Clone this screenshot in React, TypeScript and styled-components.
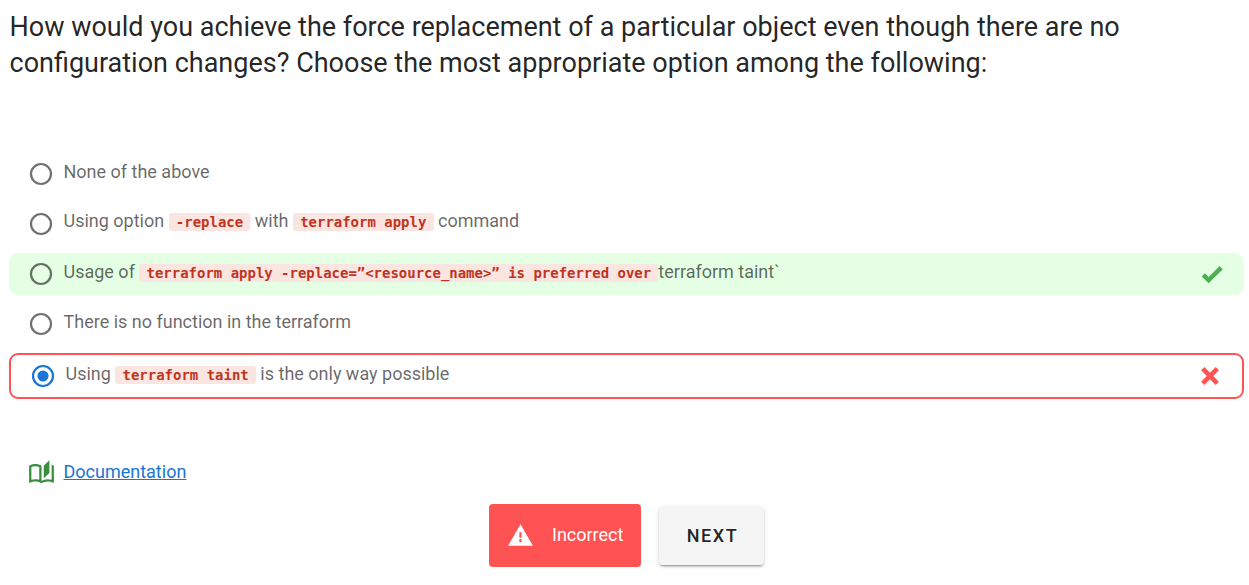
import React from "react";
import styled, { createGlobalStyle } from "styled-components";

const GlobalStyle = createGlobalStyle`
  * { box-sizing: border-box; }
  body { margin: 0; background: #fff; font-family: Roboto, sans-serif; color: rgba(0, 0, 0, 0.87); overflow: hidden; }
`;

const Page = styled.main`
  height: 585px;
  padding: 9px 5px 0 9px;
`;

const Question = styled.h1`
  margin: 0 0 72px;
  height: 72px;
  padding-left: 0.5px;
  font-size: 27px;
  font-weight: 400;
  line-height: 36px;
  white-space: nowrap;
`;

const Options = styled.div`
  display: flex;
  flex-direction: column;
  gap: 8px;
`;

type Verdict = "none" | "correct" | "wrong";

const Option = styled.label<{ $verdict: Verdict }>`
  display: flex;
  align-items: center;
  height: ${(p) => (p.$verdict === "wrong" ? 46 : 42)}px;
  padding: 0 19px;
  border: ${(p) => (p.$verdict === "wrong" ? "2px solid #ff5252" : "0")};
  border-radius: 9px;
  background: ${(p) => (p.$verdict === "correct" ? "#e4ffe4" : "transparent")};
`;

const Text = styled.span<{ $lift: number }>`
  flex: 1;
  margin-left: 9.5px;
  padding-bottom: ${(p) => p.$lift * 2}px;
  font-size: 18px;
  line-height: 22px;
  color: rgba(0, 0, 0, 0.6);
  white-space: pre;
`;

const Code = styled.code`
  display: inline-block;
  height: 18px;
  padding: 0 7.2px;
  border-radius: 3px;
  background: #fbe5e1;
  color: #c0341d;
  font: 700 13.97px/18px "DejaVu Sans Mono", monospace;
`;

const Svg = styled.svg<{ $color: string }>`
  display: block;
  flex: none;
  fill: ${(p) => p.$color};
`;

const Resource = styled.div`
  display: flex;
  align-items: center;
  height: 30px;
  margin: 58px 0 0 18.5px;
`;

const DocLink = styled.a`
  margin-left: 9px;
  font-size: 18px;
  line-height: 24px;
  color: #1976d2;
  text-decoration: underline;
`;

const Actions = styled.div`
  display: flex;
  align-items: center;
  gap: 18px;
  margin: 17px 0 0 480px;
`;

const Alert = styled.div`
  display: flex;
  align-items: center;
  width: 152px;
  height: 63px;
  padding-left: 18px;
  border-radius: 4px;
  background: #ff5252;
  color: #fff;
  font-size: 18px;
`;

const AlertText = styled.span`
  margin-left: 18px;
  padding-bottom: 2px;
`;

const NextButton = styled.button`
  width: 105px;
  height: 58px;
  margin-top: 1px;
  padding: 0 0 2px;
  border: 0;
  border-radius: 4px;
  background: #f5f5f5;
  color: rgba(0, 0, 0, 0.87);
  font: 500 18px Roboto, sans-serif;
  letter-spacing: 1.6px;
  text-indent: 2px;
  box-shadow: 0 3px 1px -2px rgba(0, 0, 0, 0.2), 0 2px 2px rgba(0, 0, 0, 0.14), 0 1px 5px rgba(0, 0, 0, 0.12);
`;

const icons = {
  check: "M9,20.42L2.79,14.21L5.62,11.38L9,14.77L18.88,4.88L21.71,7.71L9,20.42Z",
  close: "M20 6.91L17.09 4L12 9.09L6.91 4L4 6.91L9.09 12L4 17.09L6.91 20L12 14.91L17.09 20L20 17.09L14.91 12L20 6.91Z",
  alert: "M13 14H11V9H13M13 18H11V15H13M1 21H23L12 2L1 21Z",
  book: "M19 1L14 6V17L19 12.5V1M21 5V18.5C19.9 18.15 18.7 18 17.5 18C15.8 18 13.35 18.65 12 19.5V6C10.55 4.9 8.45 4.5 6.5 4.5C4.55 4.5 2.45 4.9 1 6V20.65C1 20.9 1.25 21.15 1.5 21.15C1.6 21.15 1.65 21.1 1.75 21.1C3.1 20.45 5.05 20 6.5 20C8.45 20 10.55 20.4 12 21.5C13.35 20.65 15.8 20 17.5 20C19.15 20 20.85 20.3 22.25 21.05C22.35 21.1 22.4 21.1 22.5 21.1C22.75 21.1 23 20.85 23 20.6V6C22.4 5.55 21.75 5.25 21 5M10 18.41C8.75 18.09 7.5 18 6.5 18C5.44 18 4.18 18.19 3 18.5V7.13C3.91 6.73 5.14 6.5 6.5 6.5C7.86 6.5 9.09 6.73 10 7.13V18.41Z",
  radioOff: "M12,20A8,8 0 0,1 4,12A8,8 0 0,1 12,4A8,8 0 0,1 20,12A8,8 0 0,1 12,20M12,2A10,10 0 0,0 2,12A10,10 0 0,0 12,22A10,10 0 0,0 22,12A10,10 0 0,0 12,2Z",
  radioOn: "M12,20A8,8 0 0,1 4,12A8,8 0 0,1 12,4A8,8 0 0,1 20,12A8,8 0 0,1 12,20M12,2A10,10 0 0,0 2,12A10,10 0 0,0 12,22A10,10 0 0,0 22,12A10,10 0 0,0 12,2M12,7A5,5 0 0,0 7,12A5,5 0 0,0 12,17A5,5 0 0,0 17,12A5,5 0 0,0 12,7Z",
};

function Icon({ name, color, size = 26 }: { name: keyof typeof icons; color: string; size?: number }) {
  const viewBox = size === 26 ? "0.3 0.3 23.4 23.4" : "0 0 24 24";
  return (
    <Svg $color={color} width={size} height={size} viewBox={viewBox} aria-hidden>
      <path d={icons[name]} />
    </Svg>
  );
}

interface ChoiceProps {
  verdict?: Verdict;
  selected?: boolean;
  lift?: number;
  children: React.ReactNode;
}

function Choice({ verdict = "none", selected = false, lift = 2, children }: ChoiceProps) {
  return (
    <Option $verdict={verdict}>
      <Icon name={selected ? "radioOn" : "radioOff"} color={selected ? "#1976d2" : "rgba(0,0,0,0.56)"} />
      <Text $lift={lift}>{children}</Text>
      {verdict === "correct" && <Icon name="check" color="#4caf50" />}
      {verdict === "wrong" && <Icon name="close" color="#ff5252" />}
    </Option>
  );
}

export default function App() {
  return (
    <Page>
      <GlobalStyle />
      <Question>
        How would you achieve the force replacement of a particular object even though there are no
        <br />
        configuration changes? Choose the most appropriate option among the following:
      </Question>
      <Options>
        <Choice>None of the above</Choice>
        <Choice lift={3}>
          Using option <Code>-replace</Code> with <Code>terraform apply</Code> command
        </Choice>
        <Choice verdict="correct">
          Usage of <Code>terraform apply -replace=”&lt;resource_name&gt;” is preferred over</Code>terraform taint`
        </Choice>
        <Choice>There is no function in the terraform</Choice>
        <Choice verdict="wrong" selected>
          Using <Code>terraform taint</Code> is the only way possible
        </Choice>
      </Options>
      <Resource>
        <Icon name="book" color="#388e3c" size={27} />
        <DocLink>Documentation</DocLink>
      </Resource>
      <Actions>
        <Alert>
          <Icon name="alert" color="#fff" size={27} />
          <AlertText>Incorrect</AlertText>
        </Alert>
        <NextButton>NEXT</NextButton>
      </Actions>
    </Page>
  );
}
